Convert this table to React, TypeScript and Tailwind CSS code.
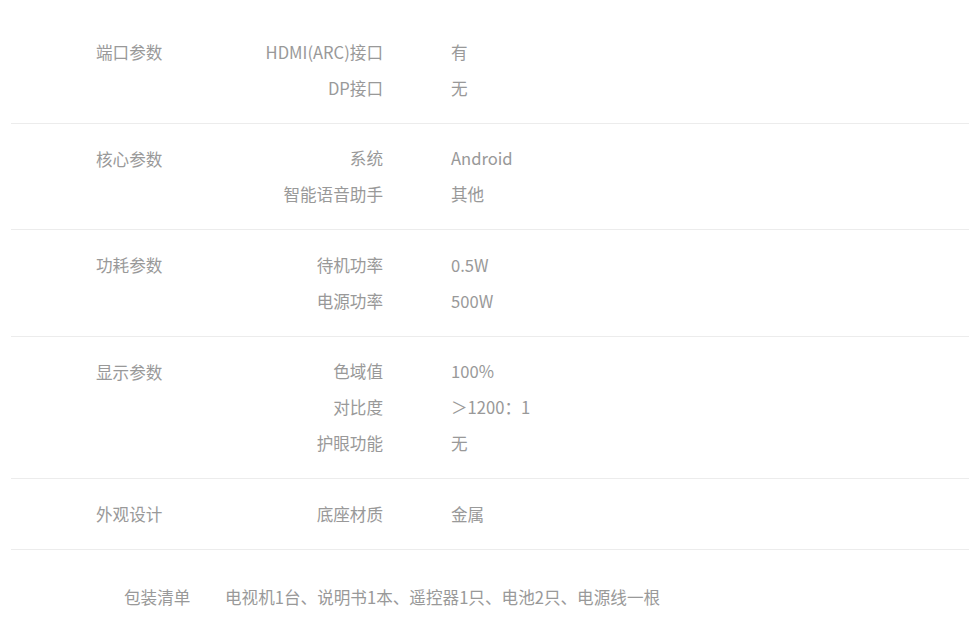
const groups = [
  { name: '端口参数', rows: [['HDMI(ARC)接口', '有'], ['DP接口', '无']] },
  { name: '核心参数', rows: [['系统', 'Android'], ['智能语音助手', '其他']] },
  { name: '功耗参数', rows: [['待机功率', '0.5W'], ['电源功率', '500W']] },
  { name: '显示参数', rows: [['色域值', '100%'], ['对比度', '＞1200：1'], ['护眼功能', '无']] },
  { name: '外观设计', rows: [['底座材质', '金属']] },
]

export default function App() {
  return (
    <div
      className="bg-white w-[969px] h-[635px] overflow-hidden pt-[17px] pl-[11px] text-[16.6px] text-[#999]"
      style={{ fontFamily: '"Microsoft YaHei", "Noto Sans CJK SC", sans-serif' }}
    >
      {groups.map((g) => (
        <div key={g.name} className="flex pt-[17px] pb-[16.6px] border-b border-[#ececec]">
          <div className="w-[85px]" />
          <div className="w-[140px] leading-[36px]">{g.name}</div>
          <div className="flex flex-col">
            {g.rows.map(([k, v]) => (
              <div key={k} className="flex h-[36px] items-center">
                <div className="w-[147px] text-right">{k}</div>
                <div className="pl-[68px]">{v}</div>
              </div>
            ))}
          </div>
        </div>
      ))}
      <div className="flex pt-[29px] leading-[36px]">
        <div className="w-[113px]" />
        <div className="w-[101px]">包装清单</div>
        <div>电视机1台、说明书1本、遥控器1只、电池2只、电源线一根</div>
      </div>
    </div>
  )
}
